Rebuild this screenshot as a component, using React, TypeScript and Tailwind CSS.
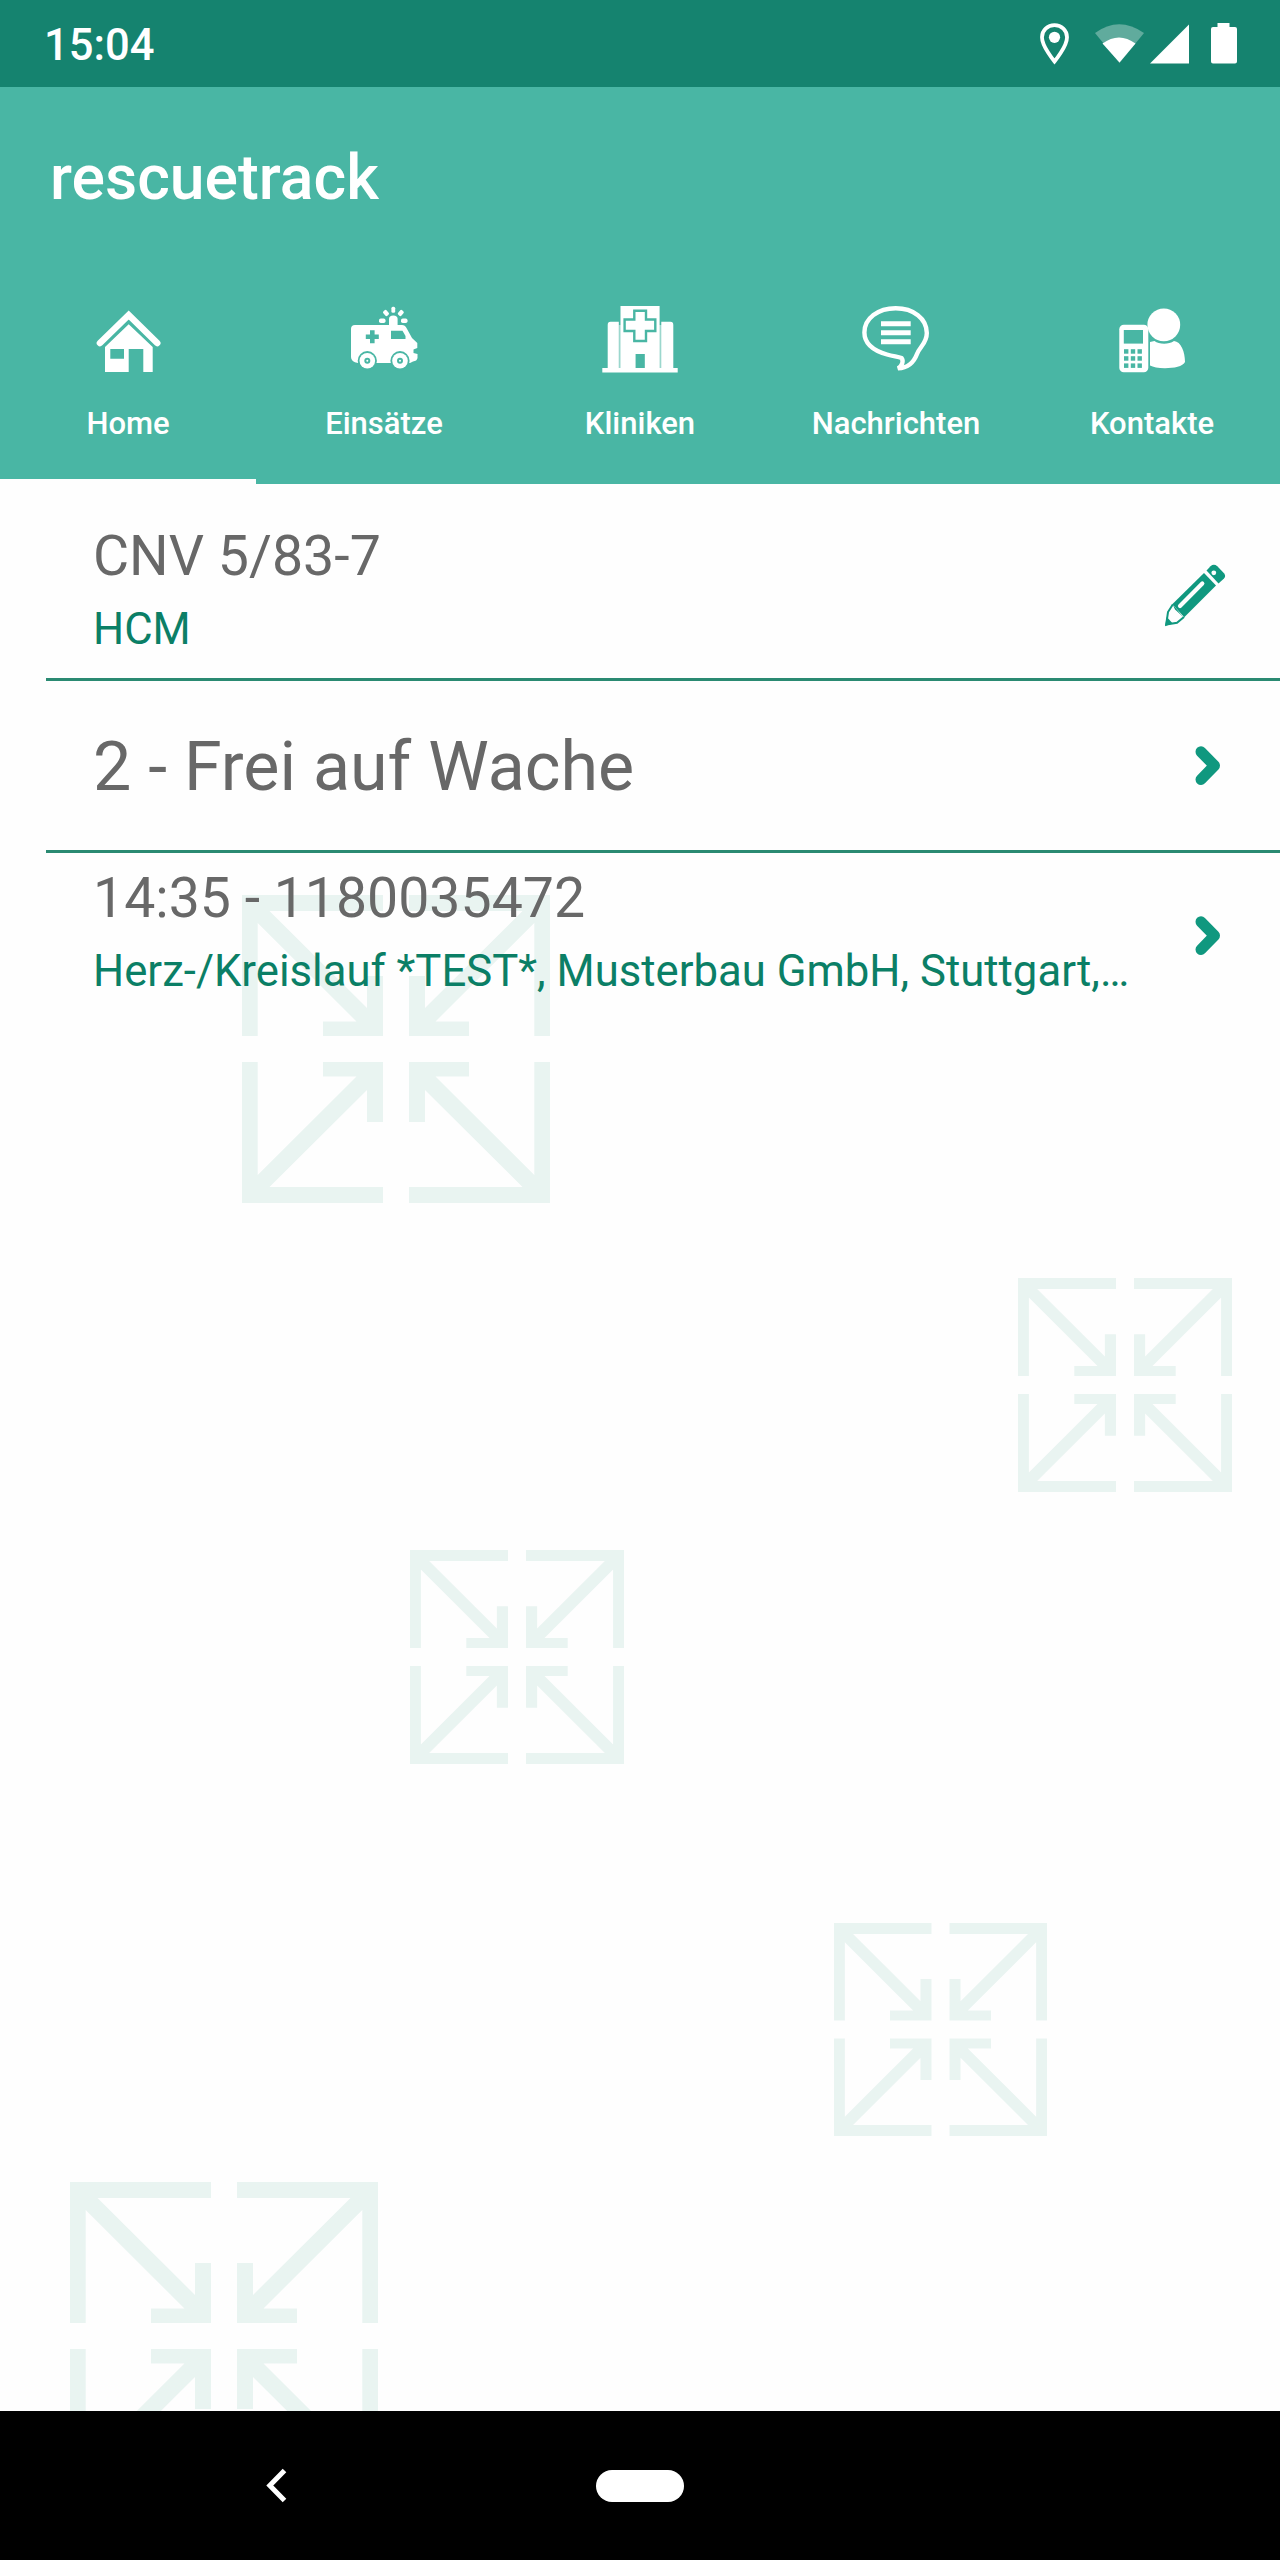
import type { ReactNode } from "react";

const TEAL = "#49b6a4";
const GREEN = "#10987f";

function HomeIcon() {
  return (
    <svg width="80" height="80" viewBox="0 0 80 80" fill="#fff">
      <path d="M12 43 40.7 15 69.2 43" fill="none" stroke="#fff" strokeWidth="6.6" strokeLinecap="round" />
      <path d="M40.7 24.3 64.7 47V72H55.3V49H40.7V72H17V47ZM22.3 49V58.7H36V49Z" fillRule="evenodd" />
    </svg>
  );
}

function AmbulanceIcon() {
  return (
    <svg width="80" height="80" viewBox="0 0 80 80" fill="#fff">
      <path d="M11 25H58Q61 25 62.5 28L68 38L73.3 43V48L69.5 49.5V53L73.5 54V58Q73 61 69 61.5L66 63H14Q7 62 7 57V29Q7 25 11 25Z" />
      <path d="M45 25V19Q45 15.500 49.300 15.500T53.600 19V25Z" />
      <rect x="47.4" y="6.8" width="3.800" height="6" rx="1.500" />
      <rect x="-2.200" y="-3" width="4.400" height="6" rx="1.500" transform="translate(42 13) rotate(-40)" />
      <rect x="-2.200" y="-3" width="4.400" height="6" rx="1.500" transform="translate(56.800 13) rotate(40)" />
      <rect x="35" y="18.500" width="6.500" height="4.600" rx="1.800" />
      <rect x="57" y="18.500" width="6.500" height="4.600" rx="1.800" />
      <path d="M26 30.2h4.6v4.2h4.2v4.6h-4.2v4.2H26V39h-4.200v-4.600H26Z" fill={TEAL} />
      <path d="M47 30.7H58.5L61.5 36V39H47Z" fill={TEAL} />
      {[23.3, 56].map((x) => (
        <g key={x}>
          <circle cx={x} cy="60.7" r="9.6" fill={TEAL} />
          <circle cx={x} cy="60.7" r="7.8" />
          <circle cx={x} cy="60.7" r="3" fill={TEAL} />
          <circle cx={x} cy="60.7" r="1" />
        </g>
      ))}
    </svg>
  );
}

function HospitalIcon() {
  return (
    <svg width="80" height="80" viewBox="0 0 80 80" fill="#fff">
      <rect x="2.3" y="68" width="75.4" height="4.5" />
      <path d="M18.8 21.7H10.5Q7.7 21.7 7.7 25V69H18.8ZM61.3 21.7H70.5Q73.3 21.7 73.3 25V69H61.3Z" />
      <path d="M18.5 25H62V69H18.5Z" opacity=".45" />
      <path d="M20.5 6H59.6V69H44.7V54H35.7V69H20.5Z" />
      <path d="M34.3 10.8H46V19.5H55.3V31H46V41H34.3V31H24.6V19.5H34.3Z" stroke={TEAL} strokeWidth="2.4" />
      <rect x="35.7" y="54" width="9" height="14" fill={TEAL} />
    </svg>
  );
}

function MessageIcon() {
  return (
    <svg width="80" height="80" viewBox="0 0 80 80" fill="none" stroke="#fff" strokeWidth="4.4">
      <path d="M42 68.3C46 66 48 61 45.5 58C42 56.5 38 56.5 31 54.5C17 50.5 8.4 43 8.4 32.5C8.4 18.5 22 8.2 39.7 8.2S70.8 18.5 70.8 33C70.8 43.5 64 46 61 54C58 62 52 68 42 68.3Z" />
      <path d="M25 23.7H54.7M25 32.7H54.7M25 41.7H54.7" strokeWidth="5" />
    </svg>
  );
}

function ContactIcon() {
  return (
    <svg width="80" height="80" viewBox="0 0 80 80" fill="#fff">
      <circle cx="51.8" cy="24.8" r="16.4" />
      <path d="M38 42L42.5 41C47 44.6 57 44.6 62 41C69 41.5 73 52 73 62C71 66.5 62 68.2 53 68.2C46 68.2 41 67 38 65.5Z" />
      <rect x="7.3" y="24.7" width="29" height="47.5" rx="4.5" />
      <rect x="11.8" y="30" width="19.2" height="13.6" fill={TEAL} />
      {[49.2, 56.2, 63.4].map((y) =>
        [12, 18.8, 25.5].map((x) => <rect key={`${x}-${y}`} x={x} y={y} width="4.4" height="4.5" fill={TEAL} />)
      )}
    </svg>
  );
}

function PencilIcon() {
  return (
    <svg className="mt-[7px]" width="64" height="64" viewBox="0 0 64 64" fill={GREEN}>
      <path d="M43.500 7.500 47.500 3.200Q50.800 .4 54.300 3.200L61 10.200Q63.300 13 61 15.500L55.500 20.500Z" />
      <circle cx="50.8" cy="9.8" r="2.4" fill="#fefefe" />
      <path d="M41 10 53 22.500 21 54.500 9 41.500Z" />
      <path d="M17 43 39.3 20.6" stroke="#fefefe" strokeWidth="4.2" strokeLinecap="round" />
      <path d="M9.8 41.500 5 49 3.200 61.500 14 59.800 21 54" fill="#fefefe" stroke={GREEN} strokeWidth="2" />
      <path d="M9.500 41 20.500 54.500 17 51 12 46.500Z" />
      <path d="M3.800 54 9.500 60.300 2 63.200Z" />
    </svg>
  );
}

function ChevronIcon() {
  return (
    <svg width="28" height="40" viewBox="0 0 28 40" fill="none" stroke={GREEN} strokeWidth="11" strokeLinecap="round" strokeLinejoin="round">
      <path d="M7 5.8 20.500 19.600 7 33.500" />
    </svg>
  );
}

function Watermark({ className }: { className: string }) {
  const corner = "M0 0H141V16H27.5L125 113V81H141V141H81V126.5H114.5L15.7 28V141H0Z";
  return (
    <svg className={className} viewBox="0 0 308 308" fill="#e9f4f1">
      <path d={corner} />
      <path d={corner} transform="matrix(-1 0 0 1 308 0)" />
      <path d={corner} transform="matrix(1 0 0 -1 0 308)" />
      <path d={corner} transform="matrix(-1 0 0 -1 308 308)" />
    </svg>
  );
}

const tabs = [
  { label: "Home", icon: <HomeIcon />, active: true },
  { label: "Einsätze", icon: <AmbulanceIcon /> },
  { label: "Kliniken", icon: <HospitalIcon /> },
  { label: "Nachrichten", icon: <MessageIcon /> },
  { label: "Kontakte", icon: <ContactIcon /> },
];

function StatusBar() {
  return (
    <div className="flex h-[87px] shrink-0 items-center justify-between bg-[#15836f] pr-[42px] pl-[44px] text-white">
      <span className="pt-[4px] text-[43.5px] leading-[52px] font-medium">15:04</span>
      <svg width="200" height="44" viewBox="0 0 200 44" fill="#fff">
        <path d="M16.5 3.2C9.5 3.2 4 8.5 4 15.2C4 24.5 16.5 39.5 16.5 39.5S29 24.5 29 15.2C29 8.5 23.5 3.2 16.5 3.2Z" fill="none" stroke="#fff" strokeWidth="3.8" />
        <circle cx="16.5" cy="15.3" r="5.6" />
        <path d="M57 11Q81 -6.5 106 11L81.5 41Z" opacity=".32" />
        <path d="M64.5 21.5Q81 9.5 97.5 21.5L81.5 40.5Z" />
        <path d="M112 41.5 151 2.5V41.5Z" />
        <path d="M179.5 1H191.5V5H197Q199 5 199 7V39.5Q199 41.5 197 41.5H175Q173 41.5 173 39.5V7Q173 5 175 5H179.5Z" />
      </svg>
    </div>
  );
}

function Row({ children, icon, className }: { children: ReactNode; icon: ReactNode; className: string }) {
  return (
    <div className={`ml-[46px] flex items-center justify-between pl-[47px] ${className}`}>
      <div className="whitespace-nowrap">{children}</div>
      {icon}
    </div>
  );
}

export default function App() {
  return (
    <div className="flex h-[2560px] w-[1280px] flex-col overflow-hidden bg-[#fefefe] font-[Roboto,sans-serif]">
      <StatusBar />

      <header className="h-[397px] shrink-0 bg-[#49b6a4] text-white">
        <h1 className="pt-[51px] pl-[50px] text-[62.5px] leading-[80px] font-medium">rescuetrack</h1>
        <nav className="mt-[82px] grid grid-cols-5">
          {tabs.map((tab) => (
            <div key={tab.label} className="flex h-[184px] flex-col items-center">
              {tab.icon}
              <span className="mt-[24px] text-[31px] leading-[40px] font-medium">{tab.label}</span>
              {tab.active && <div className="mt-auto h-[5px] w-full bg-[#fefefe]" />}
            </div>
          ))}
        </nav>
      </header>

      <main className="relative isolate flex-1 overflow-hidden text-[#686868]">
        <div className="absolute inset-0 -z-10">
          <Watermark className="absolute top-[411px] left-[242px] size-[308px]" />
          <Watermark className="absolute top-[794px] left-[1017.5px] size-[214px]" />
          <Watermark className="absolute top-[1066px] left-[410px] size-[214px]" />
          <Watermark className="absolute top-[1439px] left-[834px] size-[213px]" />
          <Watermark className="absolute top-[1698px] left-[70px] size-[308px]" />
        </div>

        <Row className="h-[197px] border-b-3 border-[#2a8a72] pt-[39px] pr-[53px] pb-[19px]" icon={<PencilIcon />}>
          <p className="text-[55.5px] leading-[64px]">CNV 5/83-7</p>
          <p className="mt-[12px] text-[43.7px] leading-[56px] text-[#0b7f66]">HCM</p>
        </Row>
        <Row className="h-[172px] border-b-3 border-[#2a8a72] pr-[58px]" icon={<ChevronIcon />}>
          <p className="pt-[3px] text-[68.2px] leading-[80px]">2 - Frei auf Wache</p>
        </Row>
        <Row className="h-[166px] pr-[58px]" icon={<ChevronIcon />}>
          <p className="text-[55.4px] leading-[64px]">14:35 - 1180035472</p>
          <p className="mt-[12px] pb-[6px] text-[43.7px] leading-[56px] text-[#0b7f66]">
            Herz-/Kreislauf *TEST*, Musterbau GmbH, Stuttgart,…
          </p>
        </Row>
      </main>

      <footer className="grid h-[149px] shrink-0 grid-cols-3 items-center bg-black">
        <svg className="ml-[266px]" width="22" height="36" viewBox="0 0 22 36" fill="none" stroke="#fff" strokeWidth="5">
          <path d="M18.5 2.5 3.8 17.5 18.5 32.5" />
        </svg>
        <div className="h-[32px] w-[88px] justify-self-center rounded-full bg-white" />
      </footer>
    </div>
  );
}
